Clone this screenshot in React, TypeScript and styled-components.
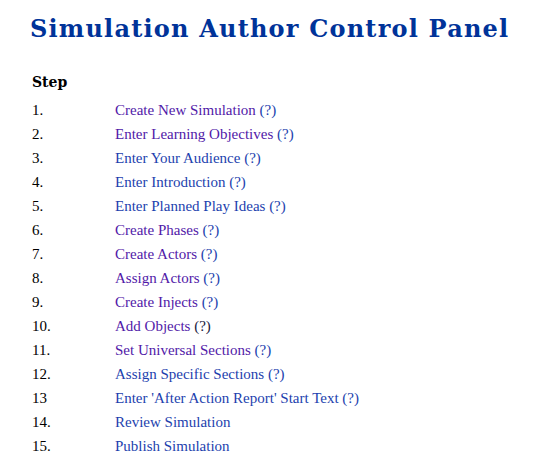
import React from "react";
import styled, { createGlobalStyle } from "styled-components";

const Global = createGlobalStyle`
  html, body { margin: 0; padding: 0; background: #ffffff; }
  body { font-family: "Liberation Serif", "Times New Roman", serif; }
`;

const Page = styled.div`
  padding: 14px 0 0 30px;
`;

const Title = styled.h1`
  margin: 0;
  font-family: "DejaVu Serif", serif;
  font-weight: bold;
  font-size: 24px;
  letter-spacing: 1.2px;
  color: #003399;
  line-height: 30px;
`;

const Heading = styled.div`
  margin: 28px 0 6px 2px;
  font-family: "DejaVu Serif", serif;
  font-weight: bold;
  font-size: 14px;
  color: #000;
  line-height: 20px;
`;

const List = styled.div`
  display: grid;
  grid-template-columns: 83px auto;
  grid-auto-rows: 24px;
  margin-left: 2px;
  font-size: 15px;
  line-height: 24px;
`;

const Num = styled.div`
  color: #000;
`;

const Item = styled.div``;

const Link = styled.a<{ $visited?: boolean }>`
  color: ${(p) => (p.$visited ? "#5119a8" : "#1d3fae")};
  text-decoration: none;
`;

const Help = styled.a<{ $plain?: boolean }>`
  color: ${(p) => (p.$plain ? "#1a1a40" : "#1d3fae")};
  text-decoration: none;
`;

type Step = { n: string; label: string; visited?: boolean; help?: boolean; plainHelp?: boolean };

const steps: Step[] = [
  { n: "1.", label: "Create New Simulation", visited: true, help: true },
  { n: "2.", label: "Enter Learning Objectives", visited: true, help: true },
  { n: "3.", label: "Enter Your Audience", help: true },
  { n: "4.", label: "Enter Introduction", help: true },
  { n: "5.", label: "Enter Planned Play Ideas", help: true },
  { n: "6.", label: "Create Phases", visited: true, help: true },
  { n: "7.", label: "Create Actors", visited: true, help: true },
  { n: "8.", label: "Assign Actors", visited: true, help: true },
  { n: "9.", label: "Create Injects", visited: true, help: true },
  { n: "10.", label: "Add Objects", visited: true, help: true, plainHelp: true },
  { n: "11.", label: "Set Universal Sections", visited: true, help: true },
  { n: "12.", label: "Assign Specific Sections", help: true },
  { n: "13", label: "Enter 'After Action Report' Start Text", help: true },
  { n: "14.", label: "Review Simulation" },
  { n: "15.", label: "Publish Simulation" },
];

export default function App() {
  return (
    <>
      <Global />
      <Page>
        <Title>Simulation Author Control Panel</Title>
        <Heading>Step</Heading>
        <List>
          {steps.map((s) => (
            <React.Fragment key={s.n}>
              <Num>{s.n}</Num>
              <Item>
                <Link href="#" $visited={s.visited}>{s.label}</Link>
                {s.help && (
                  <>
                    {" "}
                    <Help href="#" $plain={s.plainHelp}>(?)</Help>
                  </>
                )}
              </Item>
            </React.Fragment>
          ))}
        </List>
      </Page>
    </>
  );
}
